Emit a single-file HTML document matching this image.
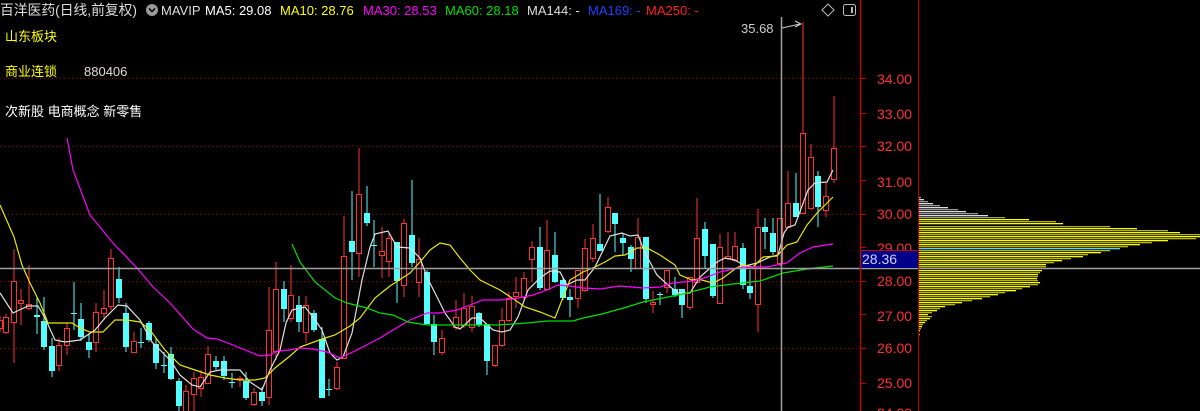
<!DOCTYPE html>
<html><head><meta charset="utf-8">
<style>
html,body{margin:0;padding:0;background:#000;width:1200px;height:411px;overflow:hidden}
svg{display:block}
text{font-family:"Liberation Sans","Noto Sans CJK SC",sans-serif}
</style></head><body>
<svg id="s" width="1200" height="411" xmlns="http://www.w3.org/2000/svg">
<rect width="1200" height="411" fill="#000"/>
<g stroke="#a00000" stroke-width="1" stroke-dasharray="1,3">
<line x1="0" y1="78.5" x2="860" y2="78.5"/><line x1="0" y1="146.5" x2="860" y2="146.5"/>
<line x1="0" y1="214.5" x2="860" y2="214.5"/><line x1="0" y1="281.5" x2="860" y2="281.5"/>
<line x1="0" y1="348.5" x2="860" y2="348.5"/>
</g>
<g id="cd"></g>
<g id="ma" fill="none" stroke-width="1.2"></g>
<line x1="0" y1="268.5" x2="1200" y2="268.5" stroke="#a0a0a0" stroke-width="1.5"/>
<line x1="781.5" y1="17" x2="781.5" y2="411" stroke="#a0a0a0" stroke-width="1.5"/>
<path d="M782 28 L800 24 M795 21 L801 24 L795 27" stroke="#ccc" fill="none"/>
<text x="741" y="33" fill="#ccc" font-size="13">35.68</text>
<path d="M828 4 L834 10 L828 16 L822 10 Z" stroke="#bbb" fill="none"/>
<rect x="843.5" y="4.5" width="12" height="11" rx="2" stroke="#bbb" fill="none"/>
<rect x="851" y="7" width="2" height="6" fill="#bbb"/>
<line x1="860.5" y1="0" x2="860.5" y2="411" stroke="#c00000" stroke-width="1.5"/>
<line x1="918.5" y1="0" x2="918.5" y2="411" stroke="#c00000" stroke-width="1"/>
<g stroke="#c00000">
<line x1="860" y1="78.5" x2="866" y2="78.5"/><line x1="860" y1="113.5" x2="866" y2="113.5"/>
<line x1="860" y1="146.5" x2="866" y2="146.5"/><line x1="860" y1="180.5" x2="866" y2="180.5"/>
<line x1="860" y1="214.5" x2="866" y2="214.5"/><line x1="860" y1="247.5" x2="866" y2="247.5"/>
<line x1="860" y1="281.5" x2="866" y2="281.5"/><line x1="860" y1="314.5" x2="866" y2="314.5"/>
<line x1="860" y1="348.5" x2="866" y2="348.5"/><line x1="860" y1="383.5" x2="866" y2="383.5"/>
</g>
<g fill="#ff3030" font-size="14">
<text x="877" y="84">34.00</text><text x="877" y="119">33.00</text><text x="877" y="151">32.00</text>
<text x="877" y="187">31.00</text><text x="877" y="219">30.00</text><text x="877" y="253">29.00</text>
<text x="877" y="286">28.00</text><text x="877" y="321">27.00</text><text x="877" y="353">26.00</text>
<text x="877" y="388">25.00</text><text x="877" y="418">24.00</text>
</g>
<rect x="861" y="251" width="57" height="17" fill="#000088"/>
<line x1="860" y1="250.5" x2="918" y2="250.5" stroke="#c00000"/>
<text x="862" y="264" fill="#d0d0ff" font-size="14">28.36</text>
<g id="vp"></g>
<g font-size="13">
<text x="0" y="15" fill="#ddd" font-size="14" textLength="137" lengthAdjust="spacingAndGlyphs">百洋医药(日线,前复权)</text>
<circle cx="152" cy="10" r="6" fill="#999"/>
<path d="M149 8.5 L152 11.5 L155 8.5" stroke="#000" stroke-width="1.5" fill="none"/>
<text x="161" y="15" fill="#ddd">MAVIP</text>
<text x="205" y="15" fill="#fff">MA5: 29.08</text>
<text x="280" y="15" fill="#ffff00">MA10: 28.76</text>
<text x="363" y="15" fill="#ff00ff">MA30: 28.53</text>
<text x="445" y="15" fill="#00e000">MA60: 28.18</text>
<text x="527" y="15" fill="#ddd">MA144: -</text>
<text x="588" y="15" fill="#2040ff">MA169: -</text>
<text x="646" y="15" fill="#ff2020">MA250: -</text>
<text x="5" y="41" fill="#ffff00">山东板块</text>
<text x="5" y="76" fill="#ffff00">商业连锁</text>
<text x="84" y="76" fill="#ddd">880406</text>
<text x="5" y="116" fill="#fff">次新股 电商概念 新零售</text>
</g>
</svg>
<script>
var NS="http://www.w3.org/2000/svg";
function el(p,t,a){var e=document.createElementNS(NS,t);for(var k in a)e.setAttribute(k,a[k]);p.appendChild(e);return e;}
var C=[[-3,320,328,316,332,1],[3,317,332,314,334,1],[11,281,322,249,363,1],[18,300,303,289,325,1],[26,304,308,265,310,1],[34,315,317,297,334,0],[41,321,347,297,350,0],[49,346,371,338,377,0],[56,345,365,338,371,1],[64,328,345,323,355,1],[71,313,314,282,330,0],[78,319,337,303,341,0],[86,342,350,333,358,0],[93,312,342,303,352,1],[101,308,313,290,320,1],[108,258,306,249,310,1],[116,279,298,267,303,0],[123,313,347,303,352,0],[131,341,352,332,353,1],[138,342,343,328,348,0],[146,323,340,321,342,0],[153,344,363,338,369,0],[161,365,366,352,373,0],[168,354,379,347,380,0],[176,381,406,378,411,0],[183,391,411,385,411,1],[191,378,394,372,411,1],[198,377,388,370,397,1],[205,354,383,346,384,1],[213,361,367,356,370,0],[221,361,376,356,380,0],[229,382,383,373,388,0],[237,378,379,376,387,1],[243,381,398,372,400,0],[251,392,404,388,406,1],[259,392,401,387,406,0],[266,330,397,287,405,1],[273,289,351,262,360,1],[281,289,309,281,322,0],[288,295,318,265,322,1],[296,305,322,296,332,0],[303,305,332,296,343,1],[311,313,330,310,332,0],[319,339,398,327,398,0],[326,389,390,379,396,0],[334,367,388,362,390,1],[341,256,358,216,358,1],[349,241,252,191,280,0],[356,194,253,148,277,1],[364,213,223,186,226,0],[371,245,246,220,267,0],[379,251,255,227,278,1],[386,238,261,233,277,1],[394,242,281,242,303,0],[401,223,285,219,297,1],[409,235,263,180,267,0],[416,259,282,238,297,1],[424,272,324,270,325,0],[431,324,342,315,355,0],[439,338,352,330,355,1],[453,317,327,300,330,1],[461,308,325,293,328,1],[469,306,327,296,332,1],[476,313,325,312,327,0],[484,324,361,324,375,0],[492,345,365,345,367,1],[499,320,345,308,347,1],[506,298,320,292,322,1],[513,292,296,277,308,1],[521,278,297,272,300,1],[529,247,259,241,282,1],[537,247,288,227,290,0],[544,250,289,220,290,1],[552,255,282,232,283,0],[560,280,298,278,300,0],[567,297,300,289,317,0],[575,270,298,270,308,1],[582,248,290,239,292,1],[590,238,258,224,262,1],[597,244,251,194,251,0],[605,207,231,197,233,1],[612,213,224,213,252,0],[620,238,243,233,255,0],[628,247,259,245,272,0],[635,237,268,218,268,1],[643,237,299,237,303,0],[650,302,304,291,313,1],[657,294,295,292,305,0],[664,270,287,270,293,1],[672,289,295,277,297,0],[679,289,305,289,318,0],[687,277,307,277,310,1],[694,238,282,198,282,1],[702,229,256,222,268,0],[710,244,296,244,298,0],[717,247,303,234,303,1],[725,256,258,232,260,1],[732,246,260,232,262,1],[740,248,285,243,289,0],[747,286,293,270,299,0],[755,227,304,209,332,1],[762,227,232,218,249,0],[770,233,252,218,255,0],[777,218,263,218,266,1],[785,203,227,171,227,1],[793,203,217,173,217,0],[800,133,213,22,214,1],[808,157,208,144,210,1],[815,176,207,171,227,0],[823,196,210,183,217,1],[831,148,179,96,183,1]];
var cd=document.getElementById('cd');
C.forEach(function(c){
 var x=c[0],col=c[5]?'#ff3232':'#54ffff',cx=x+3;
 el(cd,'line',{x1:cx,y1:c[3],x2:cx,y2:c[4],stroke:col,'stroke-width':1});
 var h=Math.max(1,c[2]-c[1]);
 if(c[5]) el(cd,'rect',{x:x+0.5,y:c[1]+0.5,width:5,height:h,fill:'#000',stroke:col,'stroke-width':1});
 else el(cd,'rect',{x:x,y:c[1],width:6,height:h,fill:col});
});
var M={
'#e0e0e0':[[0,293],[13,313],[28,306],[38,306],[45,318],[55,340],[65,342],[80,340],[95,330],[105,318],[118,305],[127,306],[140,320],[152,342],[160,350],[170,360],[180,375],[192,385],[200,387],[210,372],[220,370],[240,370],[250,382],[262,390],[270,370],[280,350],[286,323],[292,310],[305,307],[313,317],[322,330],[330,353],[337,360],[343,357],[352,333],[362,280],[370,247],[375,234],[388,231],[397,247],[410,248],[420,258],[427,277],[437,297],[445,313],[455,327],[460,329],[472,318],[480,318],[493,330],[502,332],[510,330],[518,317],[528,290],[540,278],[550,271],[560,272],[567,285],[577,280],[585,280],[595,267],[610,236],[622,233],[630,236],[638,235],[645,253],[657,275],[668,285],[678,293],[690,293],[700,277],[717,262],[725,258],[735,260],[745,266],[757,263],[770,257],[778,255],[784,233],[788,227],[795,225],[808,190],[815,183],[827,182],[833,170]],
'#e8e800':[[0,205],[14,237],[22,265],[30,283],[40,303],[48,323],[58,323],[72,323],[80,328],[90,332],[103,332],[115,320],[127,320],[140,322],[150,330],[165,350],[180,365],[195,370],[210,375],[225,378],[240,380],[255,380],[265,378],[275,368],[290,356],[300,347],[325,338],[335,335],[350,326],[360,318],[375,298],[390,286],[410,273],[420,262],[430,250],[440,243],[450,245],[460,258],[470,270],[480,280],[500,290],[515,300],[525,307],[540,312],[555,318],[562,300],[570,280],[583,272],[595,267],[605,262],[615,256],[625,255],[637,248],[647,248],[660,255],[675,265],[680,275],[692,280],[698,279],[713,283],[723,278],[735,269],[742,265],[753,267],[763,257],[777,256],[787,245],[797,242],[807,225],[817,213],[833,197]],
'#ff00ff':[[67,138],[73,170],[90,215],[113,243],[137,268],[153,287],[170,303],[193,329],[207,338],[217,339],[233,345],[260,356],[270,355],[277,351],[290,350],[300,348],[313,349],[327,352],[340,358],[357,350],[380,338],[393,330],[410,320],[427,313],[440,313],[457,310],[470,305],[483,300],[500,300],[513,299],[533,295],[547,290],[558,285],[570,286],[583,288],[600,289],[620,286],[643,288],[660,287],[673,283],[693,281],[707,277],[720,272],[743,267],[767,267],[787,263],[800,253],[813,247],[833,244]],
'#00e000':[[292,244],[300,262],[315,282],[335,298],[347,303],[367,308],[380,313],[393,315],[408,322],[427,325],[467,325],[497,325],[513,324],[527,323],[547,321],[573,321],[583,318],[602,314],[627,307],[643,302],[663,298],[683,294],[710,287],[733,284],[760,281],[783,273],[807,269],[833,266]]};
var ma=document.getElementById('ma');
for(var k in M) el(ma,'polyline',{points:M[k].map(function(p){return p.join(',')}).join(' '),stroke:k});
var P=[[197,921],[199,924],[201,928],[203,933],[205,940],[207,948],[209,958],[211,966],[213,978],[215,988],[217,1005],[219,1029],[221,1056],[223,1063],[226,1110],[228,1137],[230,1168],[232,1180],[234,1200],[236,1200],[238,1196],[240,1168],[242,1152],[244,1140],[246,1128],[248,1120],[250,1110],[252,1101],[254,1088],[256,1083],[258,1071],[260,1062],[262,1054],[264,1046],[266,1046],[270,1042],[272,1040],[274,1038],[276,1038],[278,1037],[280,1038],[282,1040],[284,1038],[286,1030],[288,1022],[290,1016],[292,1005],[294,998],[296,990],[298,982],[300,972],[302,962],[304,955],[306,945],[308,940],[310,937],[312,932],[314,928],[316,932],[318,930],[320,927],[322,925],[324,923],[326,922],[328,921],[330,920],[334,920],[340,919],[350,919],[356,919]];
var vp=document.getElementById('vp');
P.forEach(function(p,i){var c=p[0]<218?(i%2?'#ddd':'#999'):(p[0]==248?'#60d0ff':(i%2?'#ffff00':'#b8b800'));
 el(vp,'rect',{x:919,y:p[0],width:p[1]-919,height:1.3,fill:c});});
</script>
</body></html>
